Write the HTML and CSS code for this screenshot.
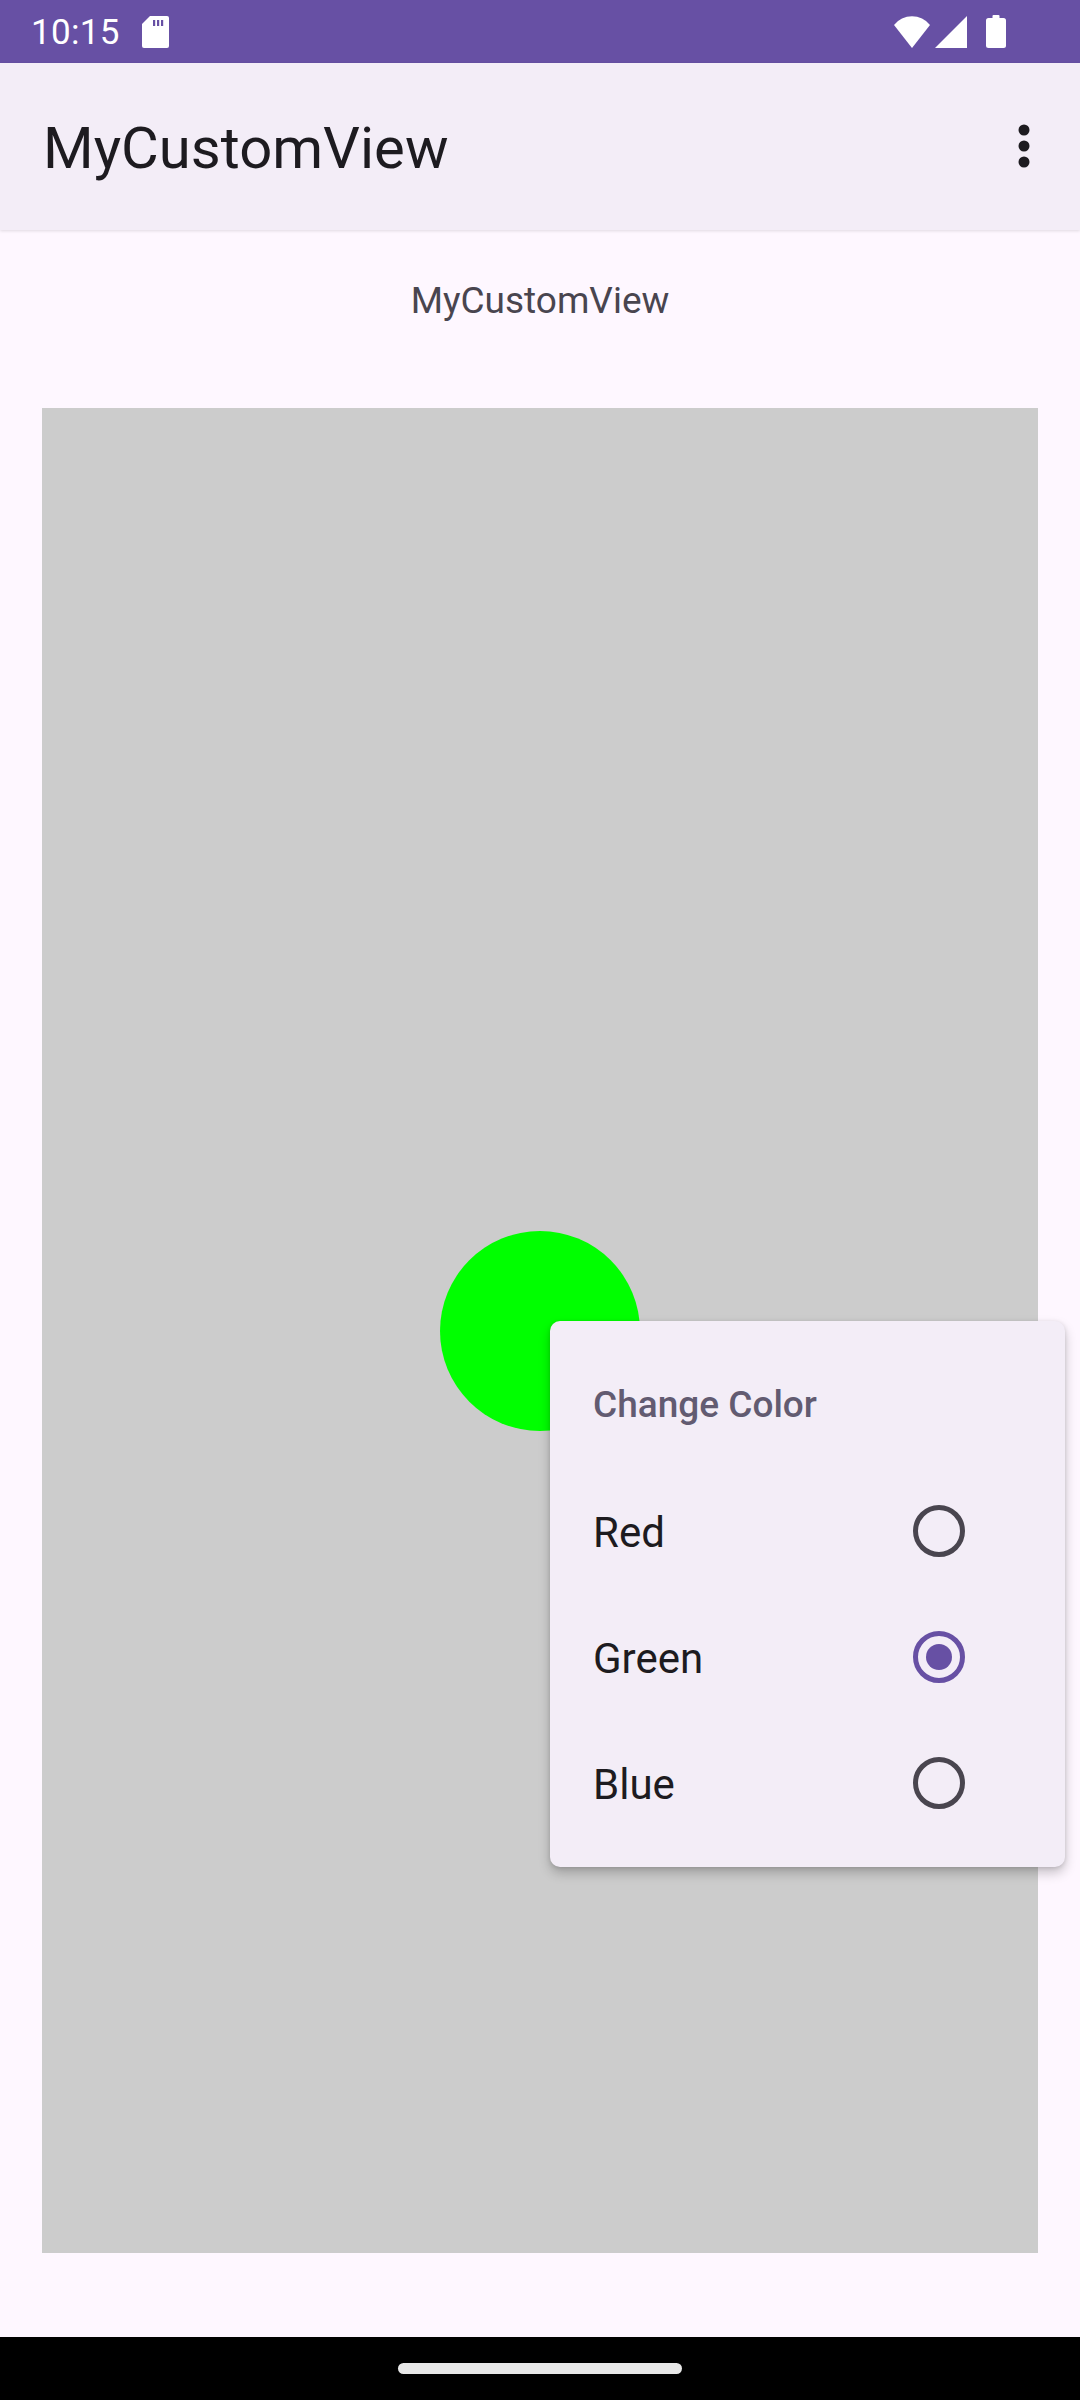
FILE: index.html
```html
<!DOCTYPE html>
<html>
<head>
<meta charset="utf-8">
<link rel="stylesheet" href="styles.css">
</head>
<body>
<div class="screen">
  <div class="status-bar">
    <div class="status-left">
      <span class="time">10:15</span>
      <svg class="sd-icon" width="27" height="32" viewBox="0 0 27 32">
        <path d="M8 0 H25 A2 2 0 0 1 27 2 V30 A2 2 0 0 1 25 32 H2 A2 2 0 0 1 0 30 V8 Z" fill="#fff"/>
        <rect x="11" y="4" width="2.2" height="6" fill="#6750A4"/>
        <rect x="15" y="4" width="2.2" height="6" fill="#6750A4"/>
        <rect x="19" y="4" width="2.2" height="6" fill="#6750A4"/>
      </svg>
    </div>
    <div class="status-right">
      <svg width="38" height="32" viewBox="0 0 38 32">
        <path d="M19 32 L1 9 A23 23 0 0 1 37 9 Z" fill="#fff"/>
      </svg>
      <svg width="32" height="32" viewBox="0 0 32 32">
        <path d="M32 0 L32 32 L0 32 Z" fill="#fff"/>
      </svg>
      <svg width="20" height="33" viewBox="0 0 20 33">
        <rect x="6.5" y="0" width="7" height="4" rx="1" fill="#fff"/>
        <rect x="0" y="3" width="20" height="30" rx="2.5" fill="#fff"/>
      </svg>
    </div>
  </div>

  <div class="app-bar">
    <span class="app-title">MyCustomView</span>
    <svg class="overflow" width="12" height="48" viewBox="0 0 12 48">
      <circle cx="6" cy="6" r="5.5" fill="#1D1B20"/>
      <circle cx="6" cy="22" r="5.5" fill="#1D1B20"/>
      <circle cx="6" cy="38" r="5.5" fill="#1D1B20"/>
    </svg>
  </div>

  <div class="content">
    <div class="subtitle">MyCustomView</div>
    <div class="canvas-box">
      <div class="dot"></div>
    </div>
  </div>

  <div class="nav-bar">
    <div class="handle"></div>
  </div>

  <div class="popup-menu">
    <div class="menu-title">Change Color</div>
    <div class="menu-item"><span>Red</span><span class="radio"></span></div>
    <div class="menu-item"><span>Green</span><span class="radio checked"></span></div>
    <div class="menu-item"><span>Blue</span><span class="radio"></span></div>
  </div>
</div>
</body>
</html>
```

FILE: styles.css
```css
* {
  box-sizing: border-box;
}

html, body {
  margin: 0;
  padding: 0;
  background: #FEF7FF;
}

body {
  font-family: Roboto, "Noto Sans", "Liberation Sans", sans-serif;
}

.screen {
  position: relative;
  width: 1080px;
  height: 2400px;
  display: flex;
  flex-direction: column;
  background: #FEF7FF;
  overflow: hidden;
}

.status-bar {
  height: 63px;
  flex: none;
  background: #6750A4;
  display: flex;
  align-items: center;
  justify-content: space-between;
  padding: 0 74px 0 31px;
}

.status-left {
  display: flex;
  align-items: center;
  gap: 22px;
}

.time {
  color: #fff;
  font-size: 35px;
  line-height: 40px;
  letter-spacing: 0.3px;
  margin-top: 2px;
}

.sd-icon {
  display: block;
}

.status-right {
  display: flex;
  align-items: center;
  gap: 4px;
}

.status-right svg {
  display: block;
}

.status-right svg:last-child {
  margin-left: 15px;
}

.app-bar {
  height: 167px;
  flex: none;
  background: #F3EDF7;
  display: flex;
  align-items: center;
  justify-content: space-between;
  padding: 0 50px 0 43px;
  box-shadow: 0 1px 3px rgba(0, 0, 0, 0.12);
  position: relative;
  z-index: 1;
}

.app-title {
  font-size: 58px;
  color: #1D1B20;
  line-height: 68px;
  margin-top: 2px;
}

.overflow {
  display: block;
  margin-top: 2px;
}

.content {
  flex: 1;
  display: flex;
  flex-direction: column;
  align-items: center;
  padding-top: 49px;
}

.subtitle {
  font-size: 37px;
  line-height: 43px;
  color: #49454F;
  text-align: center;
}

.canvas-box {
  margin-top: 86px;
  width: 996px;
  height: 1845px;
  background: #CCCCCC;
  display: flex;
  align-items: center;
  justify-content: center;
}

.dot {
  width: 200px;
  height: 200px;
  border-radius: 50%;
  background: #00FF00;
}

.nav-bar {
  height: 63px;
  flex: none;
  background: #000;
  display: flex;
  justify-content: center;
  padding-top: 26px;
}

.handle {
  width: 284px;
  height: 11px;
  border-radius: 6px;
  background: #E8E8E8;
}

.popup-menu {
  position: absolute;
  left: 550px;
  top: 1321px;
  width: 515px;
  padding: 21px 0;
  background: #F3EDF7;
  border-radius: 10px;
  box-shadow: 0 6px 12px rgba(0, 0, 0, 0.22), 0 1px 4px rgba(0, 0, 0, 0.12);
  z-index: 2;
}

.menu-title {
  height: 126px;
  line-height: 126px;
  padding-left: 43px;
  font-size: 37px;
  font-weight: 500;
  color: #625B71;
}

.menu-item {
  height: 126px;
  display: flex;
  align-items: center;
  justify-content: space-between;
  padding: 0 100px 0 43px;
  font-size: 42px;
  color: #1D1B20;
}

.menu-item span:first-child {
  margin-top: 2px;
}

.radio {
  width: 52px;
  height: 52px;
  border-radius: 50%;
  border: 5.5px solid #49454F;
  display: flex;
  align-items: center;
  justify-content: center;
}

.radio.checked {
  border-color: #6750A4;
}

.radio.checked::after {
  content: "";
  width: 26px;
  height: 26px;
  border-radius: 50%;
  background: #6750A4;
}
```
